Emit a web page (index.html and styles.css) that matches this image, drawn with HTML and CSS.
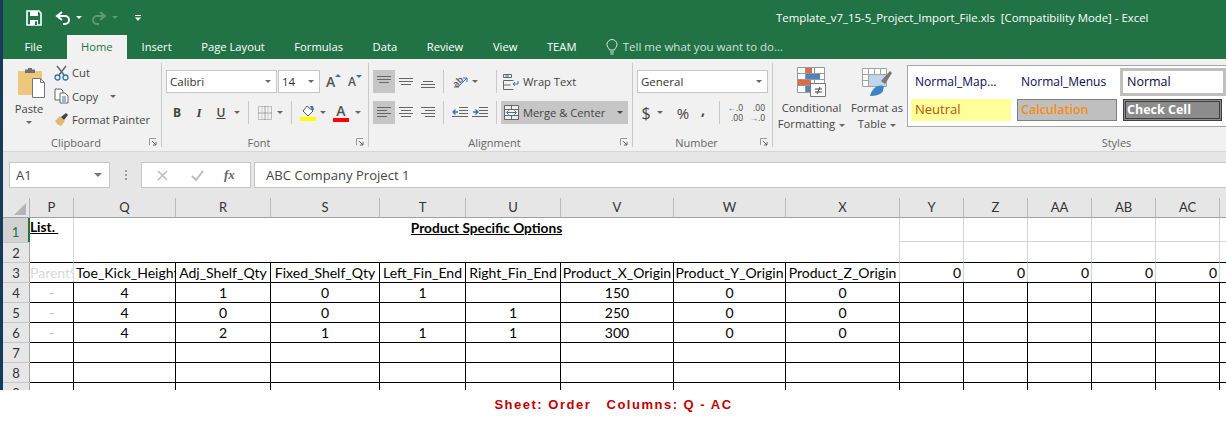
FILE: index.html
```html
<!DOCTYPE html>
<html lang="en">
<head>
<meta charset="utf-8">
<title>Template_v7_15-5_Project_Import_File.xls - Excel</title>
<link rel="stylesheet" href="styles.css">
</head>
<body>
<div class="app">
  <header class="titlebar">
    <svg class="qat-save" width="16" height="16" viewBox="0 0 16 16"><path d="M1 1h12l2 2v12H1z" fill="none" stroke="#fff" stroke-width="1.6"/><path d="M4 1h8v5H4z" fill="#fff"/><path d="M4 10h8v5H4z" fill="#fff"/><path d="M9 11.5h2V15H9z" fill="#217346"/></svg>
    <svg class="qat-undo" width="16" height="14" viewBox="0 0 16 14"><path d="M7 1L2 5l5 4" fill="none" stroke="#fff" stroke-width="2"/><path d="M2.5 5H10a4 4 0 0 1 0 8H8" fill="none" stroke="#fff" stroke-width="2"/></svg>
    <span class="qat-caret"></span>
    <svg class="qat-redo" width="16" height="14" viewBox="0 0 16 14"><path d="M9 1l5 4-5 4" fill="none" stroke="#5d9a79" stroke-width="2"/><path d="M13.5 5H6a4 4 0 0 0 0 8h2" fill="none" stroke="#5d9a79" stroke-width="2"/></svg>
    <span class="qat-caret dim"></span>
    <svg class="qat-more" width="8" height="8" viewBox="0 0 8 8"><path d="M1 1h6v1H1z" fill="#fff"/><path d="M1 3.5h6L4 7z" fill="#fff"/></svg>
    <span class="doc-title">Template_v7_15-5_Project_Import_File.xls&nbsp; [Compatibility Mode] - Excel</span>
  </header>

  <nav class="tabs">
    <span class="tab file">File</span>
    <span class="tab home">Home</span>
    <span class="tab">Insert</span>
    <span class="tab">Page Layout</span>
    <span class="tab">Formulas</span>
    <span class="tab">Data</span>
    <span class="tab">Review</span>
    <span class="tab">View</span>
    <span class="tab">TEAM</span>
    <span class="tell">
      <svg width="12" height="16" viewBox="0 0 12 16"><path d="M3.5 11C3 9 1 8 1 5.5a5 5 0 0 1 10 0C11 8 9 9 8.500 11z" fill="none" stroke="#dbe8e0"/><path d="M4 13h4M4.500 15h3" stroke="#dbe8e0"/></svg>
      Tell me what you want to do...
    </span>
  </nav>

  <section class="ribbon">
    <div class="group clipboard">
      <div class="body clip-body">
        <div class="paste">
          <svg width="29" height="30" viewBox="0 0 29 30"><path d="M1 3h24v24H1z" fill="#eec77f"/><path d="M8 1.500h10V5H8z" fill="#6f6f6f"/><path d="M11 0h4v3h-4z" fill="#6f6f6f"/><path d="M15.500 10.500h8l4 4v15h-12z" fill="#fff" stroke="#777"/><path d="M23.500 10.500v4h4" fill="none" stroke="#777"/></svg>
          <span class="paste-label">Paste</span>
          <span class="caret"></span>
        </div>
        <div class="clip-list">
          <div class="clip-item">
            <svg width="15" height="16" viewBox="0 0 15 16"><path d="M3 1l7 9M12 1L5 10" stroke="#666" stroke-width="1.500"/><circle cx="3.500" cy="12.500" r="2.500" fill="none" stroke="#2f75b5" stroke-width="1.300"/><circle cx="11.500" cy="12.500" r="2.500" fill="none" stroke="#2f75b5" stroke-width="1.300"/></svg>
            <span>Cut</span>
          </div>
          <div class="clip-item">
            <svg width="15" height="16" viewBox="0 0 15 16"><path d="M1 1h6l2 2v9H1z" fill="#fff" stroke="#666"/><path d="M6 5h5l3 3v7H6z" fill="#fff" stroke="#666"/><path d="M8 9h4M8 11h4M8 13h4" stroke="#2f75b5"/></svg>
            <span>Copy</span><span class="caret copy-caret"></span>
          </div>
          <div class="clip-item">
            <svg width="15" height="15" viewBox="0 0 15 15"><path d="M1 9l5-5 5 5-4 5-2-1-1 0z" fill="#e3b873"/><path d="M7 5l5-4 2 2-4 5z" fill="#444"/></svg>
            <span>Format Painter</span>
          </div>
        </div>
      </div>
      <div class="glabel"><span class="gname">Clipboard</span><svg class="launch" width="8" height="8" viewBox="0 0 8 8"><path d="M.5 7V.5H7" fill="none" stroke="#999"/><path d="M3 3l4 4M7 4v3H4" fill="none" stroke="#666"/></svg></div>
    </div>

    <div class="group font">
      <div class="body stack">
        <div class="row">
          <div class="combo combo-font"><span>Calibri</span><i class="caret"></i></div>
          <div class="combo combo-size"><span>14</span><i class="caret"></i></div>
          <span class="grow-a big">A<i class="up"></i></span>
          <span class="grow-a small">A<i class="down"></i></span>
        </div>
        <div class="row">
          <span class="tool b">B</span>
          <span class="tool i">I</span>
          <span class="tool u">U</span>
          <span class="t-caret"><i class="caret"></i></span>
          <span class="sep"></span>
          <span class="tool w20"><svg width="14" height="14" viewBox="0 0 14 14"><path d="M.5.500h13v13H.5z" fill="none" stroke="#888" stroke-dasharray="1 1"/><path d="M7 .5v13M.5 7h13" stroke="#666" stroke-dasharray="1 1"/><path d="M4 .5v13M10 .5v13" stroke="#aaa" stroke-dasharray="1 1"/></svg></span>
          <span class="t-caret"><i class="caret"></i></span>
          <span class="sep"></span>
          <span class="fill"><svg width="14" height="12" viewBox="0 0 14 12"><path d="M6 1l6 5-5 5-5-5z" fill="#fff" stroke="#555"/><path d="M9 1h3l1 4-2 0z" fill="#2f75b5"/></svg><b class="bar yellow"></b></span>
          <span class="t-caret"><i class="caret"></i></span>
          <span class="fcolor"><span class="fc-a">A</span><b class="bar red"></b></span>
          <span class="t-caret narrow"><i class="caret"></i></span>
        </div>
      </div>
      <div class="glabel"><span class="gname">Font</span><svg class="launch" width="8" height="8" viewBox="0 0 8 8"><path d="M.5 7V.5H7" fill="none" stroke="#999"/><path d="M3 3l4 4M7 4v3H4" fill="none" stroke="#666"/></svg></div>
    </div>

    <div class="group align">
      <div class="body stack">
        <div class="row">
          <span class="tool w22 on"><svg width="14" height="14" viewBox="0 0 14 14"><path d="M0 1.500h14M0 4.500h14M2 7.500h10" stroke="#666"/></svg></span>
          <span class="tool w22"><svg width="14" height="14" viewBox="0 0 14 14"><path d="M0 3.500h14M0 6.500h14M2 9.500h10" stroke="#666"/></svg></span>
          <span class="tool w22"><svg width="14" height="14" viewBox="0 0 14 14"><path d="M2 6.500h10M0 9.500h14M0 12.500h14" stroke="#666"/></svg></span>
          <span class="sep s-a"></span>
          <span class="tool w20 orient"><span class="ab">ab</span><svg width="18" height="16" viewBox="0 0 18 16"><path d="M7 13L16 4M16 4h-4M16 4v4" fill="none" stroke="#2f75b5"/><path d="M3 13h5" stroke="#666"/></svg></span>
          <span class="t-caret"><i class="caret"></i></span>
          <span class="sep s-b"></span>
          <span class="wrap"><svg width="16" height="16" viewBox="0 0 16 16"><path d="M.5.500h8v3h-8zM.5 6.500h10M.5 6.500v9h10M.5 11h7" fill="none" stroke="#666"/><path d="M15 7v3H10M12 8l-2 2 2 2" fill="none" stroke="#2f75b5"/><path d="M2 2h4" stroke="#2f75b5"/></svg><span>Wrap Text</span></span>
        </div>
        <div class="row">
          <span class="tool w22 on"><svg width="14" height="12" viewBox="0 0 14 12"><path d="M0 .5h14M0 3.500h10M0 6.500h14M0 9.500h10" stroke="#666"/></svg></span>
          <span class="tool w22"><svg width="14" height="12" viewBox="0 0 14 12"><path d="M0 .5h14M2 3.500h10M0 6.500h14M2 9.500h10" stroke="#666"/></svg></span>
          <span class="tool w22"><svg width="14" height="12" viewBox="0 0 14 12"><path d="M0 .5h14M4 3.500h10M0 6.500h14M4 9.500h10" stroke="#666"/></svg></span>
          <span class="sep s-a"></span>
          <span class="tool w20"><svg width="16" height="12" viewBox="0 0 16 12"><path d="M7 .5h9M7 3.500h9M7 6.500h9M0 9.500h16" fill="none" stroke="#666"/><path d="M1 5h5M3.500 2.500L1 5l2.500 2.500" fill="none" stroke="#2f75b5" stroke-width="1.300"/></svg></span>
          <span class="tool w20"><svg width="16" height="12" viewBox="0 0 16 12"><path d="M7 .5h9M7 3.500h9M7 6.500h9M0 9.500h16" fill="none" stroke="#666"/><path d="M1 5h5M3.500 2.500L6 5 3.500 7.500" fill="none" stroke="#2f75b5" stroke-width="1.300"/></svg></span>
          <span class="sep s-c"></span>
          <span class="merge"><svg width="15" height="15" viewBox="0 0 15 15"><path d="M.5.500h14v14H.5zM.5 4.500h14M.5 10.500h14M7.500.5v4M7.500 10.500v4" fill="#eee" stroke="#666"/><path d="M3 7.500h9" stroke="#2f75b5"/><path d="M4.500 5.500l-2 2 2 2M10.500 5.500l2 2-2 2" fill="none" stroke="#2f75b5"/></svg><span>Merge &amp; Center</span><i class="caret dark"></i></span>
        </div>
      </div>
      <div class="glabel"><span class="gname">Alignment</span><svg class="launch" width="8" height="8" viewBox="0 0 8 8"><path d="M.5 7V.5H7" fill="none" stroke="#999"/><path d="M3 3l4 4M7 4v3H4" fill="none" stroke="#666"/></svg></div>
    </div>

    <div class="group number">
      <div class="body stack">
        <div class="row">
          <div class="combo combo-num"><span>General</span><i class="caret"></i></div>
        </div>
        <div class="row">
          <span class="tool num-dollar">$</span>
          <span class="t-caret"><i class="caret"></i></span>
          <span class="tool num-pct">%</span>
          <span class="tool num-comma">,</span>
          <span class="sep s-d"></span>
          <span class="dec inc"><span><em>←</em>.0</span><span>.00</span></span>
          <span class="dec"><span>.00</span><span><em>→</em>.0</span></span>
        </div>
      </div>
      <div class="glabel"><span class="gname">Number</span><svg class="launch" width="8" height="8" viewBox="0 0 8 8"><path d="M.5 7V.5H7" fill="none" stroke="#999"/><path d="M3 3l4 4M7 4v3H4" fill="none" stroke="#666"/></svg></div>
    </div>

    <div class="group styles">
      <div class="body styles-body">
        <div class="big-btn cond">
          <svg width="30" height="30" viewBox="0 0 30 30"><path d="M.5.500h27v25H.5zM.5 6.500h27M.5 12.500h27M.5 18.500h27M8.500.5v25M17.500.5v25" fill="#fff" stroke="#999"/><path d="M9 1h6v5H9z" fill="#dd6b43"/><path d="M9 7h14v5H9z" fill="#4d86bd"/><path d="M1 13h13v5H1z" fill="#dd6b43"/><path d="M9 19h5v6H9z" fill="#4d86bd"/><path d="M13.500 16.500h15v13h-15z" fill="#fff" stroke="#777"/><path d="M18 22h7M18 25h7M23 20l-3 7" stroke="#444" fill="none"/></svg>
          <span>Conditional<br>Formatting<i class="caret lbl"></i></span>
        </div>
        <div class="big-btn fat">
          <svg width="31" height="30" viewBox="0 0 31 30"><path d="M.5 1.500h24v18H.5zM.5 7.500h24M.5 13.500h24M6.500 1.500v18M12.500 1.500v18M18.500 1.500v18" fill="#fff" stroke="#a3a3a3"/><path d="M7 8h17v11H7z" fill="#c1d4ea"/><path d="M19 14l9-10 2 2-7 11z" fill="#777"/><path d="M8 29c2-8 8-12 14-10l-1 5c-2 4-8 5-13 5z" fill="#3c84c4"/></svg>
          <span>Format as<br>Table<i class="caret lbl"></i></span>
        </div>
        <div class="gallery">
          <span class="sty plain">Normal_Map...</span>
          <span class="sty plain menus">Normal_Menus</span>
          <span class="sty normal">Normal</span>
          <span class="sty neutral">Neutral</span>
          <span class="sty calc">Calculation</span>
          <span class="sty check">Check Cell</span>
        </div>
      </div>
      <div class="glabel styles-label"><span class="gname">Styles</span></div>
    </div>
  </section>

  <section class="formula">
    <div class="namebox"><span>A1</span><i class="caret"></i></div>
    <span class="dots"></span>
    <div class="fx-box">
      <svg width="13" height="13" viewBox="0 0 13 13"><path d="M2 2l9 9M11 2l-9 9" stroke="#bdbdbd" stroke-width="1.600"/></svg>
      <svg width="15" height="13" viewBox="0 0 15 13"><path d="M2 7l4 4 7-9" fill="none" stroke="#bdbdbd" stroke-width="2"/></svg>
      <span class="fx">fx</span>
    </div>
    <div class="fx-input">ABC Company Project 1</div>
  </section>

  <section class="sheet">
    <div class="corner"><svg width="12" height="12" viewBox="0 0 12 12"><path d="M12 0v12H0z" fill="#b4b4b4"/></svg></div>
    <div class="ch">P</div><div class="ch">Q</div><div class="ch">R</div><div class="ch">S</div><div class="ch">T</div><div class="ch">U</div><div class="ch">V</div><div class="ch">W</div><div class="ch">X</div><div class="ch">Y</div><div class="ch">Z</div><div class="ch">AA</div><div class="ch">AB</div><div class="ch">AC</div><div class="ch"></div>

    <div class="rh sel">1</div>
    <div class="c none list"><u>List.&nbsp;</u></div>
    <div class="c merged"><u>Product Specific Options</u></div>
    <div class="c lt lb"></div><div class="c lt lb"></div><div class="c lt lb"></div><div class="c lt lb"></div><div class="c lt lb"></div><div class="c lt lb"></div>

    <div class="rh">2</div>
    <div class="c none"></div>
    <div class="c lt"></div><div class="c lt"></div><div class="c lt"></div><div class="c lt"></div><div class="c lt"></div><div class="c lt"></div>

    <div class="rh">3</div>
    <div class="c top-only ghost">Parent9</div>
    <div class="c lt-left head left">Toe_Kick_Height</div><div class="c head">Adj_Shelf_Qty</div><div class="c head">Fixed_Shelf_Qty</div><div class="c head">Left_Fin_End</div><div class="c head">Right_Fin_End</div><div class="c head">Product_X_Origin</div><div class="c head">Product_Y_Origin</div><div class="c head">Product_Z_Origin</div>
    <div class="c lt-left right">0</div><div class="c lt-left right">0</div><div class="c lt-left right">0</div><div class="c lt-left right">0</div><div class="c lt-left right">0</div><div class="c lt-left"></div>

    <div class="rh">4</div>
    <div class="c top-only dash">-</div>
    <div class="c">4</div><div class="c">1</div><div class="c">0</div><div class="c">1</div><div class="c"></div><div class="c">150</div><div class="c">0</div><div class="c">0</div>
    <div class="c"></div><div class="c"></div><div class="c"></div><div class="c"></div><div class="c"></div><div class="c"></div>

    <div class="rh">5</div>
    <div class="c top-only dash">-</div>
    <div class="c">4</div><div class="c">0</div><div class="c">0</div><div class="c"></div><div class="c">1</div><div class="c">250</div><div class="c">0</div><div class="c">0</div>
    <div class="c"></div><div class="c"></div><div class="c"></div><div class="c"></div><div class="c"></div><div class="c"></div>

    <div class="rh">6</div>
    <div class="c top-only dash">-</div>
    <div class="c">4</div><div class="c">2</div><div class="c">1</div><div class="c">1</div><div class="c">1</div><div class="c">300</div><div class="c">0</div><div class="c">0</div>
    <div class="c"></div><div class="c"></div><div class="c"></div><div class="c"></div><div class="c"></div><div class="c"></div>

    <div class="rh">7</div>
    <div class="c top-only"></div>
    <div class="c"></div><div class="c"></div><div class="c"></div><div class="c"></div><div class="c"></div><div class="c"></div><div class="c"></div><div class="c"></div>
    <div class="c"></div><div class="c"></div><div class="c"></div><div class="c"></div><div class="c"></div><div class="c"></div>

    <div class="rh">8</div>
    <div class="c top-only"></div>
    <div class="c"></div><div class="c"></div><div class="c"></div><div class="c"></div><div class="c"></div><div class="c"></div><div class="c"></div><div class="c"></div>
    <div class="c"></div><div class="c"></div><div class="c"></div><div class="c"></div><div class="c"></div><div class="c"></div>

    <div class="rh">9</div>
    <div class="c top-only"></div>
    <div class="c"></div><div class="c"></div><div class="c"></div><div class="c"></div><div class="c"></div><div class="c"></div><div class="c"></div><div class="c"></div>
    <div class="c"></div><div class="c"></div><div class="c"></div><div class="c"></div><div class="c"></div><div class="c"></div>
  </section>
</div>
<p class="caption">Sheet: Order   Columns: Q - AC</p>
</body>
</html>
```
FILE: styles.css
```css
* { box-sizing: border-box; }
html, body { margin: 0; padding: 0; }
body { width: 1226px; height: 423px; overflow: hidden; background: #fff; font-family: "Open Sans", "Noto Sans", sans-serif; color: #444; }
i, em { font-style: normal; }

.app { height: 390px; border-left: 3px solid #163a5c; overflow: hidden; background: #e6e6e6; }

/* title bar */
.titlebar { height: 35px; background: #217346; display: flex; align-items: center; padding-left: 23px; }
.qat-save { margin-right: 13px; }
.qat-caret { width: 0; height: 0; border: 3px solid transparent; border-top: 3px solid #fff; border-bottom: 0; margin: 0 0 0 5px; }
.qat-caret.dim { border-top-color: #5d9a79; }
.qat-redo { margin-left: 9px; }
.qat-more { margin-left: 16px; }
.doc-title { margin-left: 634px; color: #fff; font-size: 11.400px; white-space: nowrap; }

/* tabs */
.tabs { height: 24px; background: #217346; display: flex; align-items: stretch; color: #fff; font-size: 11.200px; line-height: 24px; }
.tab { padding: 0 14.800px; white-space: nowrap; }
.tab.file { margin-left: 7px; padding: 0 24.500px 0 14.500px; }
.tab.home { background: #f1f1f1; color: #217346; width: 60px; text-align: center; padding: 0; }
.tell { margin-left: 14.500px; display: flex; align-items: center; gap: 5px; color: #cfe0d6; white-space: nowrap; font-size: 11.500px; }

/* ribbon */
.ribbon { height: 93px; background: #f1f1f1; border-bottom: 1px solid #d6d6d6; display: flex; padding-top: 4px; font-size: 11.200px; }
.group { height: 84px; border-right: 1px solid #c9c9c9; flex: none; }
.clipboard { width: 159px; }
.font { width: 207px; }
.align { width: 264px; }
.number { width: 140px; }
.styles { flex: 1; border-right: 0; }
.body { height: 71px; }
.glabel { display: flex; align-items: center; height: 16px; color: #666; font-size: 11px; }
.gname { flex: 1; text-align: center; }
.launch { margin: 0 4px 0 0; flex: none; }

.caret { display: inline-block; width: 0; height: 0; border: 3px solid transparent; border-top: 3px solid #666; border-bottom: 0; vertical-align: middle; }
.caret.dark { border-top-color: #444; }
.caret.lbl { margin-left: 4px; }

/* clipboard */
.clip-body { display: flex; padding-left: 11px; }
.paste { width: 34px; display: flex; flex-direction: column; align-items: center; padding-top: 5px; }
.paste-label { margin: 3px 4px 0 0; line-height: 16px; }
.paste .caret { margin: 4px 4px 0 0; }
.clip-list { margin: -2px 0 0 6px; }
.clip-item { display: flex; align-items: center; gap: 3px; height: 23.500px; white-space: nowrap; }
.clip-item svg { flex: none; }
.copy-caret { margin-left: 9px; }

/* stacked rows */
.stack { padding: 7px 0 0 4px; display: flex; flex-direction: column; gap: 8px; }
.row { height: 23px; display: flex; align-items: center; }
.sep { width: 1px; height: 23px; background: #c9c9c9; margin: 0 6px; flex: none; }
.tool { width: 22px; height: 23px; display: flex; align-items: center; justify-content: center; flex: none; }
.w20 { width: 20px; }
.w22 { width: 22px; }
.on { background: #c6c6c6; }
.t-caret { width: 10px; display: flex; justify-content: center; flex: none; }
.t-caret.narrow { width: 8px; }
.orient { display: grid; place-items: center; }
.orient > * { grid-area: 1 / 1; }
.ab { font-size: 9px; line-height: 9px; transform: rotate(-45deg) translate(-2px, -2px); color: #555; font-weight: 600; }

/* font */
.combo { height: 23px; background: #fff; border: 1px solid #c6c6c6; display: flex; align-items: center; justify-content: space-between; padding: 0 5px 0 3px; font-family: "Open Sans", sans-serif; font-size: 11.500px; color: #333; }
.combo-font { width: 111px; }
.combo-size { width: 42px; margin-left: 1px; }
.combo-num { width: 131px; }
.grow-a { color: #555; display: flex; font-weight: 600; flex: none; }
.grow-a.big { font-size: 14px; width: 19px; margin-left: 6px; }
.grow-a.small { font-size: 12px; margin-left: 3px; align-items: flex-end; }
.up, .down { display: block; width: 0; height: 0; border: 3px solid transparent; margin-top: 2px; }
.up { border-bottom: 3px solid #2f75b5; border-top: 0; }
.down { border-top: 3px solid #2f75b5; border-bottom: 0; align-self: flex-start; }
.b { font-weight: 700; font-size: 12px; }
.i { font-family: "Liberation Serif", serif; font-style: italic; font-weight: 700; font-size: 13px; }
.u { font-weight: 600; font-size: 12px; text-decoration: underline; }
.fill { width: 20px; display: flex; flex-direction: column; align-items: center; flex: none; }
.fcolor { width: 26px; display: flex; flex-direction: column; align-items: center; flex: none; }
.fc-a { font-size: 14px; line-height: 14px; font-weight: 600; color: #555; }
.bar { display: block; width: 16px; height: 4px; }
.yellow { background: #ffff00; }
.red { background: #ff0000; }

/* alignment */
.s-a { margin: 0 6px 0 4px; }
.s-b { margin: 0 6px 0 16px; }
.s-c { margin: 0 4px 0 6px; }
.wrap { display: flex; align-items: center; gap: 4px; white-space: nowrap; }
.merge { width: 127px; height: 23px; background: #c6c6c6; display: flex; align-items: center; gap: 4px; padding-left: 3px; white-space: nowrap; flex: none; }
.merge .caret { margin-left: 8px; }

/* number */
.num-dollar { width: 18px; font-size: 16px; }
.num-pct { width: 28px; margin-left: 4px; font-size: 15px; }
.num-comma { width: 12px; font-size: 14px; font-weight: 700; padding-bottom: 6px; }
.s-d { margin: 0 7px 0 10px; }
.dec { width: 16px; display: flex; flex-direction: column; align-items: flex-end; font-size: 8.500px; line-height: 10px; flex: none; color: #444; }
.dec + .dec { margin-left: 6px; }
.dec em { color: #2f75b5; font-weight: 700; }

/* styles */
.styles-body { display: flex; padding-left: 5px; }
.big-btn { flex: none; display: flex; flex-direction: column; align-items: center; text-align: center; padding-top: 4px; line-height: 16px; white-space: nowrap; color: #444; }
.big-btn span { margin-top: 3px; }
.cond { width: 67px; }
.fat { width: 52px; margin-left: 6px; }
.gallery { margin: 2px 0 0 4px; flex: 1; height: 62px; background: #fff; border: 1px solid #a6a6a6; border-right: 0; display: grid; grid-template-columns: 100px 100px 1fr; grid-template-rows: 28px 22px; column-gap: 6px; row-gap: 3px; padding: 2px 0 0 3px; }
.sty { display: flex; align-items: center; padding: 0 0 2px 4px; font-size: 12px; white-space: nowrap; overflow: hidden; color: #0a0a50; }
.normal { border: 3px solid #bfbfbf; padding: 0 0 1px 4px; color: #0a0a3c; margin-left: -3px; font-size: 12.500px; }
.neutral { background: #ffff99; color: #b5540a; font-size: 13px; }
.calc { background: #bfbfbf; border: 1px solid #7f7f7f; color: #fa8c0a; font-weight: 600; padding-left: 3px; font-size: 12.500px; }
.check { background: #8c8c8c; border: 3px double #3f3f3f; color: #fff; font-weight: 700; padding: 0 0 1px 1px; margin-right: 4px; font-size: 12.500px; }
.styles-label { padding-left: 234px; }

/* formula bar */
.formula { height: 46px; padding: 10px 0 0 6px; display: flex; align-items: flex-start; background: #e6e6e6; }
.namebox { width: 101px; height: 26px; background: #fff; border: 1px solid #c6c6c6; display: flex; align-items: center; justify-content: space-between; padding: 0 7px 0 6px; font-size: 13px; color: #444; flex: none; }
.namebox .caret { border-width: 4px; border-top-color: #777; border-bottom: 0; }
.dots { width: 2px; height: 10px; margin: 8px 14px 0 15px; border-left: 2px dotted #9c9c9c; flex: none; }
.fx-box { width: 110px; height: 26px; background: #fff; border: 1px solid #c6c6c6; display: flex; align-items: center; padding-left: 14px; gap: 21px; flex: none; }
.fx { font-family: "Liberation Serif", serif; font-style: italic; font-weight: 700; font-size: 13px; color: #666; margin-left: -2px; }
.fx-input { margin-left: 3px; flex: 1; height: 26px; background: #fff; border: 1px solid #c6c6c6; border-right: 0; padding-left: 11px; font-size: 13.100px; line-height: 24px; color: #444; white-space: nowrap; }

/* sheet */
.sheet { display: grid; grid-template-columns: 27px 43px 102px 95px 109px 86px 95px 113px 112px 114px 64px 64px 64px 64px 64px 7px; grid-template-rows: 20px 24px 20px 20px 20px 20px 20px 20px 20px 20px; height: 192px; overflow: hidden; background: #fff; font-family: Lato, "Liberation Sans", sans-serif; font-size: 14px; color: #000; }
.corner { background: #e6e6e6; border-bottom: 1px solid #a0a0a0; border-right: 1px solid #b5b5b5; display: flex; align-items: flex-end; justify-content: flex-end; padding: 0 3px 2px 0; }
.ch { background: #e6e6e6; border-left: 1px solid #bababa; border-bottom: 1px solid #a0a0a0; text-align: center; line-height: 19px; color: #333; font-size: 13px; }
.corner + .ch { border-left: 0; }
.rh { background: #e6e6e6; border-right: 1px solid #a6a6a6; border-top: 1px solid #c6c6c6; text-align: center; line-height: 20px; color: #333; font-size: 13px; }
.rh.sel { background: #d2d2d2; color: #217346; border-right: 2px solid #217346; border-top: 0; line-height: 28px; }
.c { border-left: 1px solid #000; border-top: 1px solid #000; text-align: center; line-height: 20px; white-space: nowrap; overflow: hidden; }
.none { border: 0; }
.list { font-weight: 700; text-align: left; line-height: 18px; font-size: 13.700px; }
.merged { grid-column: 3 / span 8; grid-row: 2 / span 2; border-top: 0; border-left: 1px solid #d4d4d4; font-weight: 700; line-height: 20px; font-size: 13.700px; }
.lt { border-left: 1px solid #d4d4d4; border-top: 0; }
.lb { border-bottom: 1px solid #d4d4d4; }
.lt-left { border-left: 1px solid #d4d4d4; }
.top-only { border-left: 0; }
.ghost { color: #d8d8d8; text-align: left; }
.dash { color: #bbb; }
.left { text-align: left; padding-left: 2px; }
.right { text-align: right; padding-right: 2px; }

/* caption */
.caption { margin: 0; height: 33px; line-height: 30px; text-align: center; white-space: pre; font-family: "Liberation Sans", sans-serif; font-weight: 700; font-size: 13px; letter-spacing: 1.500px; color: #c00000; padding-left: 1px; }
```
